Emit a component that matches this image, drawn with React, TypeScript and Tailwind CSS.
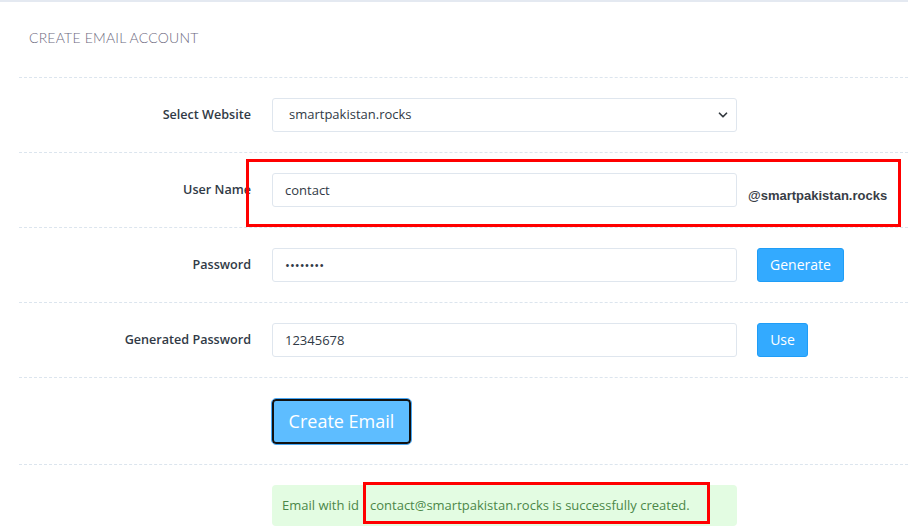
import { ChevronDown } from "lucide-react";

function Row({ label, children }: { label?: string; children: React.ReactNode }) {
  return (
    <div className="flex h-[75px] items-center border-t border-dashed border-[#dce5ee]">
      <div className="w-[232px] pr-0 text-right text-[12.6px] font-semibold text-[#313a46]">
        {label}
      </div>
      <div className="ml-[21px] flex items-center">{children}</div>
    </div>
  );
}

export default function App() {
  return (
    <div
      className="relative h-[528px] w-[908px] overflow-hidden border-t-2 border-[#e4e9f1] bg-white"
      style={{ fontFamily: '"Open Sans", sans-serif' }}
    >
      <div className="flex h-[75px] items-center pb-[4px] pl-[29px]">
        <h4
          className="text-[14px] font-light uppercase tracking-[0.2px] text-[#6d6a80]"
          style={{ fontFamily: "Lato, sans-serif" }}
        >
          Create Email Account
        </h4>
      </div>

      <div className="ml-[19px]">
        <Row label="Select Website">
          <div className="relative h-[34px] w-[465px] rounded-[3px] border border-[#dfe6ee] bg-white">
            <div className="flex h-full items-center pl-[16px] text-[13px] text-[#313a46]">
              smartpakistan.rocks
            </div>
            <ChevronDown
              className="absolute right-[6px] top-[9px] h-[14px] w-[14px] text-[#343a40]"
              strokeWidth={3}
            />
          </div>
        </Row>

        <Row label="User Name">
          <input
            readOnly
            value="contact"
            className="h-[34px] w-[465px] rounded-[3px] border border-[#dfe6ee] px-[12px] text-[13px] text-[#313a46] outline-none"
          />
          <span
            className="ml-[11px] mt-[12px] text-[13px] font-bold text-[#383d46]"
            style={{ fontFamily: '"Liberation Sans", Arial, sans-serif' }}
          >
            @smartpakistan.rocks
          </span>
        </Row>

        <Row label="Password">
          <input
            readOnly
            type="password"
            value="12345678"
            className="h-[34px] w-[465px] rounded-[3px] border border-[#dfe6ee] px-[12px] text-[13px] text-[#313a46] outline-none"
          />
          <button className="ml-[20px] h-[34px] w-[87px] rounded-[3px] border border-[#1f9df7] bg-[#33aaff] pb-[2px] text-[14px] text-white">
            Generate
          </button>
        </Row>

        <Row label="Generated Password">
          <input
            readOnly
            value="12345678"
            className="h-[34px] w-[465px] rounded-[3px] border border-[#dfe6ee] px-[12px] text-[13px] text-[#313a46] outline-none"
          />
          <button className="ml-[20px] h-[34px] w-[51px] rounded-[3px] border border-[#1f9df7] bg-[#33aaff] pb-[2px] text-[14px] text-white">
            Use
          </button>
        </Row>

        <div className="flex h-[87px] items-center border-t border-dashed border-[#dce5ee] pl-[253px]">
          <button className="h-[45px] w-[139px] rounded-[4px] border-2 border-[#111] bg-[#5ebdff] text-[18px] text-white outline outline-1 outline-[#4aa8f5]">
            Create Email
          </button>
        </div>

        <div className="border-t border-dashed border-[#dce5ee] pl-[253px] pt-[20px]">
          <div className="flex h-[41px] w-[465px] items-center rounded-[4px] bg-[#e3fce2] px-[10px] text-[13px] text-[#4b8748]">
            <span>Email with id</span>
            <span className="ml-[11px]">contact@smartpakistan.rocks is successfully created.</span>
          </div>
        </div>
      </div>

      <div className="pointer-events-none absolute left-[246px] top-[157px] h-[68px] w-[655px] border-[3px] border-[#ff0000]" />
      <div className="pointer-events-none absolute left-[363px] top-[480px] h-[42px] w-[347px] border-[3px] border-[#ff0000]" />
    </div>
  );
}
